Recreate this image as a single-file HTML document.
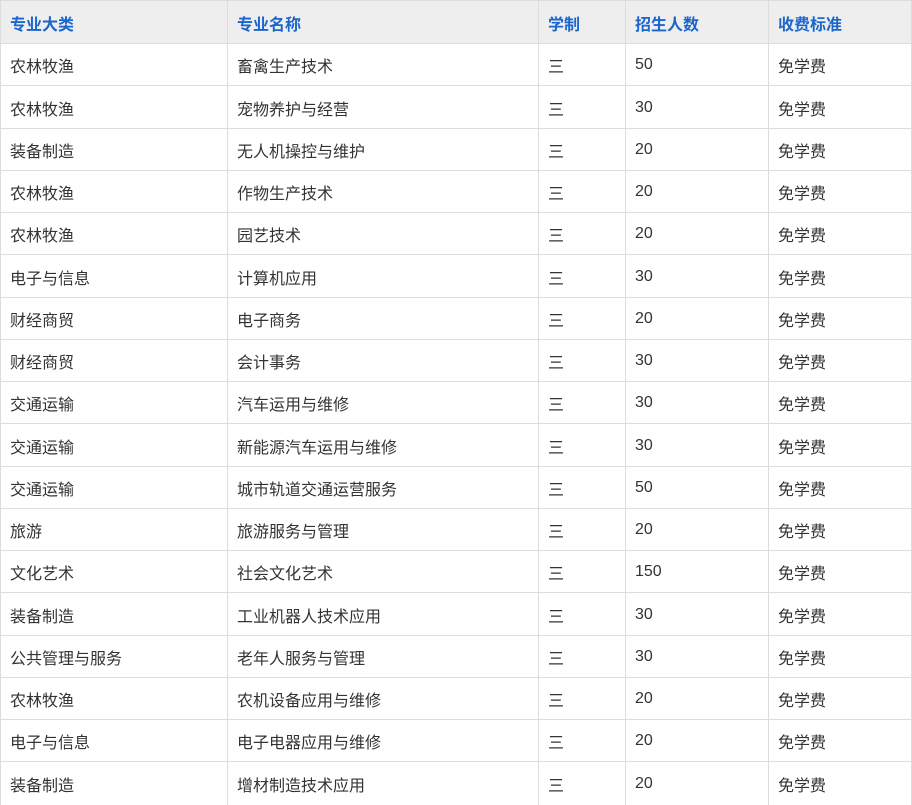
<!DOCTYPE html>
<html><head><meta charset="utf-8"><style>
body{margin:0;width:912px;height:804px;overflow:hidden;background:#fff;font-family:"Liberation Sans","Noto Sans CJK SC",sans-serif;font-size:16px;color:#333;position:relative}
.r{position:absolute;left:0;width:912px;border-top:1px solid #ddd;box-sizing:border-box}
.c{position:absolute;top:0;bottom:0;line-height:normal;display:flex;align-items:center;border-left:1px solid #ddd;box-sizing:border-box;padding-left:9px;white-space:nowrap}
.a{left:0;width:228px}.b{left:227px;width:312px}.d{left:538px;width:88px}.e{left:625px;width:144px}.f{left:768px;width:144px;border-right:1px solid #ddd}
.h{background:#eee;color:#1a66cc;font-weight:bold}
</style></head><body>
<div class="r h" style="top:0;height:44px"><div class="c a">专业大类</div><div class="c b">专业名称</div><div class="c d">学制</div><div class="c e">招生人数</div><div class="c f">收费标准</div></div>
<div class="r" style="top:43px;height:43px"><div class="c a">农林牧渔</div><div class="c b">畜禽生产技术</div><div class="c d">三</div><div class="c e">50</div><div class="c f">免学费</div></div>
<div class="r" style="top:85px;height:44px"><div class="c a">农林牧渔</div><div class="c b">宠物养护与经营</div><div class="c d">三</div><div class="c e">30</div><div class="c f">免学费</div></div>
<div class="r" style="top:128px;height:43px"><div class="c a">装备制造</div><div class="c b">无人机操控与维护</div><div class="c d">三</div><div class="c e">20</div><div class="c f">免学费</div></div>
<div class="r" style="top:170px;height:43px"><div class="c a">农林牧渔</div><div class="c b">作物生产技术</div><div class="c d">三</div><div class="c e">20</div><div class="c f">免学费</div></div>
<div class="r" style="top:212px;height:43px"><div class="c a">农林牧渔</div><div class="c b">园艺技术</div><div class="c d">三</div><div class="c e">20</div><div class="c f">免学费</div></div>
<div class="r" style="top:254px;height:44px"><div class="c a">电子与信息</div><div class="c b">计算机应用</div><div class="c d">三</div><div class="c e">30</div><div class="c f">免学费</div></div>
<div class="r" style="top:297px;height:43px"><div class="c a">财经商贸</div><div class="c b">电子商务</div><div class="c d">三</div><div class="c e">20</div><div class="c f">免学费</div></div>
<div class="r" style="top:339px;height:43px"><div class="c a">财经商贸</div><div class="c b">会计事务</div><div class="c d">三</div><div class="c e">30</div><div class="c f">免学费</div></div>
<div class="r" style="top:381px;height:43px"><div class="c a">交通运输</div><div class="c b">汽车运用与维修</div><div class="c d">三</div><div class="c e">30</div><div class="c f">免学费</div></div>
<div class="r" style="top:423px;height:44px"><div class="c a">交通运输</div><div class="c b">新能源汽车运用与维修</div><div class="c d">三</div><div class="c e">30</div><div class="c f">免学费</div></div>
<div class="r" style="top:466px;height:43px"><div class="c a">交通运输</div><div class="c b">城市轨道交通运营服务</div><div class="c d">三</div><div class="c e">50</div><div class="c f">免学费</div></div>
<div class="r" style="top:508px;height:43px"><div class="c a">旅游</div><div class="c b">旅游服务与管理</div><div class="c d">三</div><div class="c e">20</div><div class="c f">免学费</div></div>
<div class="r" style="top:550px;height:43px"><div class="c a">文化艺术</div><div class="c b">社会文化艺术</div><div class="c d">三</div><div class="c e">150</div><div class="c f">免学费</div></div>
<div class="r" style="top:592px;height:44px"><div class="c a">装备制造</div><div class="c b">工业机器人技术应用</div><div class="c d">三</div><div class="c e">30</div><div class="c f">免学费</div></div>
<div class="r" style="top:635px;height:43px"><div class="c a">公共管理与服务</div><div class="c b">老年人服务与管理</div><div class="c d">三</div><div class="c e">30</div><div class="c f">免学费</div></div>
<div class="r" style="top:677px;height:43px"><div class="c a">农林牧渔</div><div class="c b">农机设备应用与维修</div><div class="c d">三</div><div class="c e">20</div><div class="c f">免学费</div></div>
<div class="r" style="top:719px;height:43px"><div class="c a">电子与信息</div><div class="c b">电子电器应用与维修</div><div class="c d">三</div><div class="c e">20</div><div class="c f">免学费</div></div>
<div class="r" style="top:761px;height:44px"><div class="c a">装备制造</div><div class="c b">增材制造技术应用</div><div class="c d">三</div><div class="c e">20</div><div class="c f">免学费</div></div>
</body></html>
